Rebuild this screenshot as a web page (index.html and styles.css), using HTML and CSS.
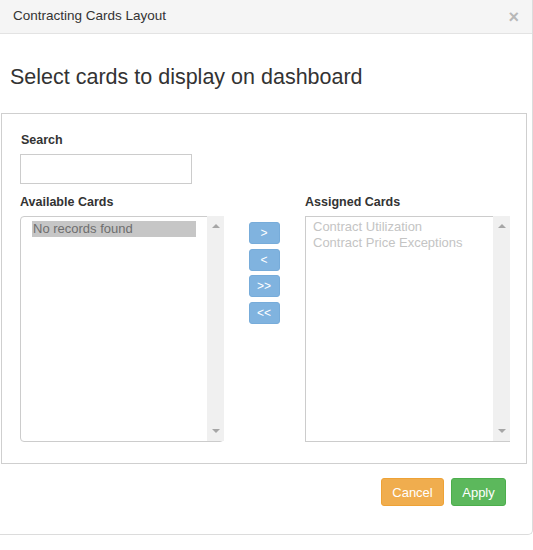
FILE: index.html
```html
<!DOCTYPE html>
<html>
<head>
<meta charset="utf-8">
<link rel="stylesheet" href="styles.css">
</head>
<body>
<div class="modal">
  <div class="modal-header">
    <span class="title">Contracting Cards Layout</span>
    <span class="close">×</span>
  </div>
  <div class="modal-body">
    <h2 class="heading">Select cards to display on dashboard</h2>
    <div class="panel">
      <div class="lbl lbl-search">Search</div>
      <input class="search" type="text">
      <div class="lists">
        <div class="col">
          <div class="lbl lbl-list">Available Cards</div>
          <div class="listbox listbox-left">
            <div class="items items-left">
              <div class="item item-sel">No records found</div>
            </div>
            <div class="scrollbar"><span class="arr arr-up"></span><span class="arr arr-down"></span></div>
          </div>
        </div>
        <div class="mid">
          <button class="mv">&gt;</button>
          <button class="mv">&lt;</button>
          <button class="mv">&gt;&gt;</button>
          <button class="mv">&lt;&lt;</button>
        </div>
        <div class="col">
          <div class="lbl lbl-list">Assigned Cards</div>
          <div class="listbox listbox-right">
            <div class="items items-right">
              <div class="item item-dis">Contract Utilization</div>
              <div class="item item-dis">Contract Price Exceptions</div>
            </div>
            <div class="scrollbar"><span class="arr arr-up"></span><span class="arr arr-down"></span></div>
          </div>
        </div>
      </div>
    </div>
  </div>
  <div class="modal-footer">
    <button class="btn btn-cancel">Cancel</button>
    <button class="btn btn-apply">Apply</button>
  </div>
</div>
</body>
</html>
```
FILE: styles.css
```css
* { box-sizing: border-box; }
body {
  margin: 0;
  background: #fff;
  font-family: "Liberation Sans", Arial, sans-serif;
  color: #333;
}
.modal {
  width: 533px;
  border-right: 1px solid #dcdcdc;
  border-bottom: 1px solid #dcdcdc;
  border-bottom-right-radius: 5px;
}
.modal-header {
  height: 34px;
  background: #f5f5f5;
  border-bottom: 1px solid #e3e3e3;
  display: flex;
  align-items: center;
  justify-content: space-between;
  padding: 0 13px 0 13px;
}
.title {
  font-size: 13.5px;
  color: #333;
  line-height: 16px;
  padding-bottom: 1px;
}
.close {
  font-size: 18px;
  font-weight: bold;
  color: #b8b8b8;
  line-height: 18px;
  padding-top: 1px;
}
.modal-body {
  padding: 0;
}
.heading {
  margin: 31px 0 0 10px;
  font-size: 21.5px;
  line-height: 24px;
  font-weight: normal;
  color: #333;
}
.panel {
  margin: 24px 5px 0 1px;
  border: 1px solid #cfcfcf;
  padding: 19px 17px 21px 18px;
}
.lbl {
  font-size: 12.5px;
  font-weight: bold;
  line-height: 15px;
  color: #333;
}
.lbl-search {
  padding-left: 1px;
}
.search {
  display: block;
  margin-top: 6px;
  width: 172px;
  height: 30px;
  border: 1px solid #cccccc;
  border-radius: 0;
  padding: 0;
}
.lists {
  margin-top: 11px;
  display: grid;
  grid-template-columns: 204px 81px 205px;
}
.lbl-list {
  margin-bottom: 6px;
}
.listbox {
  height: 226px;
  border: 1px solid #cccccc;
  display: flex;
}
.listbox-left {
  border-radius: 4px;
}
.items {
  flex: 1;
  font-size: 13px;
  line-height: 16px;
}
.items-left {
  padding: 4px 11px 0 11px;
}
.items-right {
  padding: 2px 7px 0 7px;
}
.item { white-space: nowrap; }
.item-sel {
  background: #c6c6c6;
  color: #6e6e6e;
  padding-left: 1px;
  height: 16px;
}
.item-dis {
  color: #c4c4c4;
}
.scrollbar {
  width: 17px;
  margin: -1px -1px 0 0;
  background: #f0f0f0;
  display: flex;
  flex-direction: column;
  justify-content: space-between;
  align-items: center;
  padding: 8px 0 8px;
}
.arr {
  width: 0;
  height: 0;
  border-left: 4px solid transparent;
  border-right: 4px solid transparent;
}
.arr-up { border-bottom: 4px solid #a6a6a6; }
.arr-down { border-top: 4px solid #a6a6a6; }
.mid {
  display: flex;
  flex-direction: column;
  align-items: center;
  gap: 4.7px;
  padding-top: 27px;
  padding-right: 1px;
}
.mv {
  width: 31px;
  height: 22px;
  border: 1px solid #77acda;
  border-radius: 3px;
  background: #80b3df;
  color: #fff;
  font-family: "Liberation Sans", Arial, sans-serif;
  font-size: 12px;
  line-height: 12px;
  padding: 0;
}
.modal-footer {
  display: flex;
  justify-content: flex-end;
  gap: 7px;
  padding: 14px 26px 28px 0;
}
.btn {
  height: 28px;
  border-radius: 3px;
  color: #fff;
  font-family: "Liberation Sans", Arial, sans-serif;
  font-size: 13px;
  padding: 0 10px;
}
.btn-cancel {
  width: 63px;
  background: #f0ad4e;
  border: 1px solid #eea236;
}
.btn-apply {
  width: 55px;
  background: #5cb85c;
  border: 1px solid #4cae4c;
}
```
